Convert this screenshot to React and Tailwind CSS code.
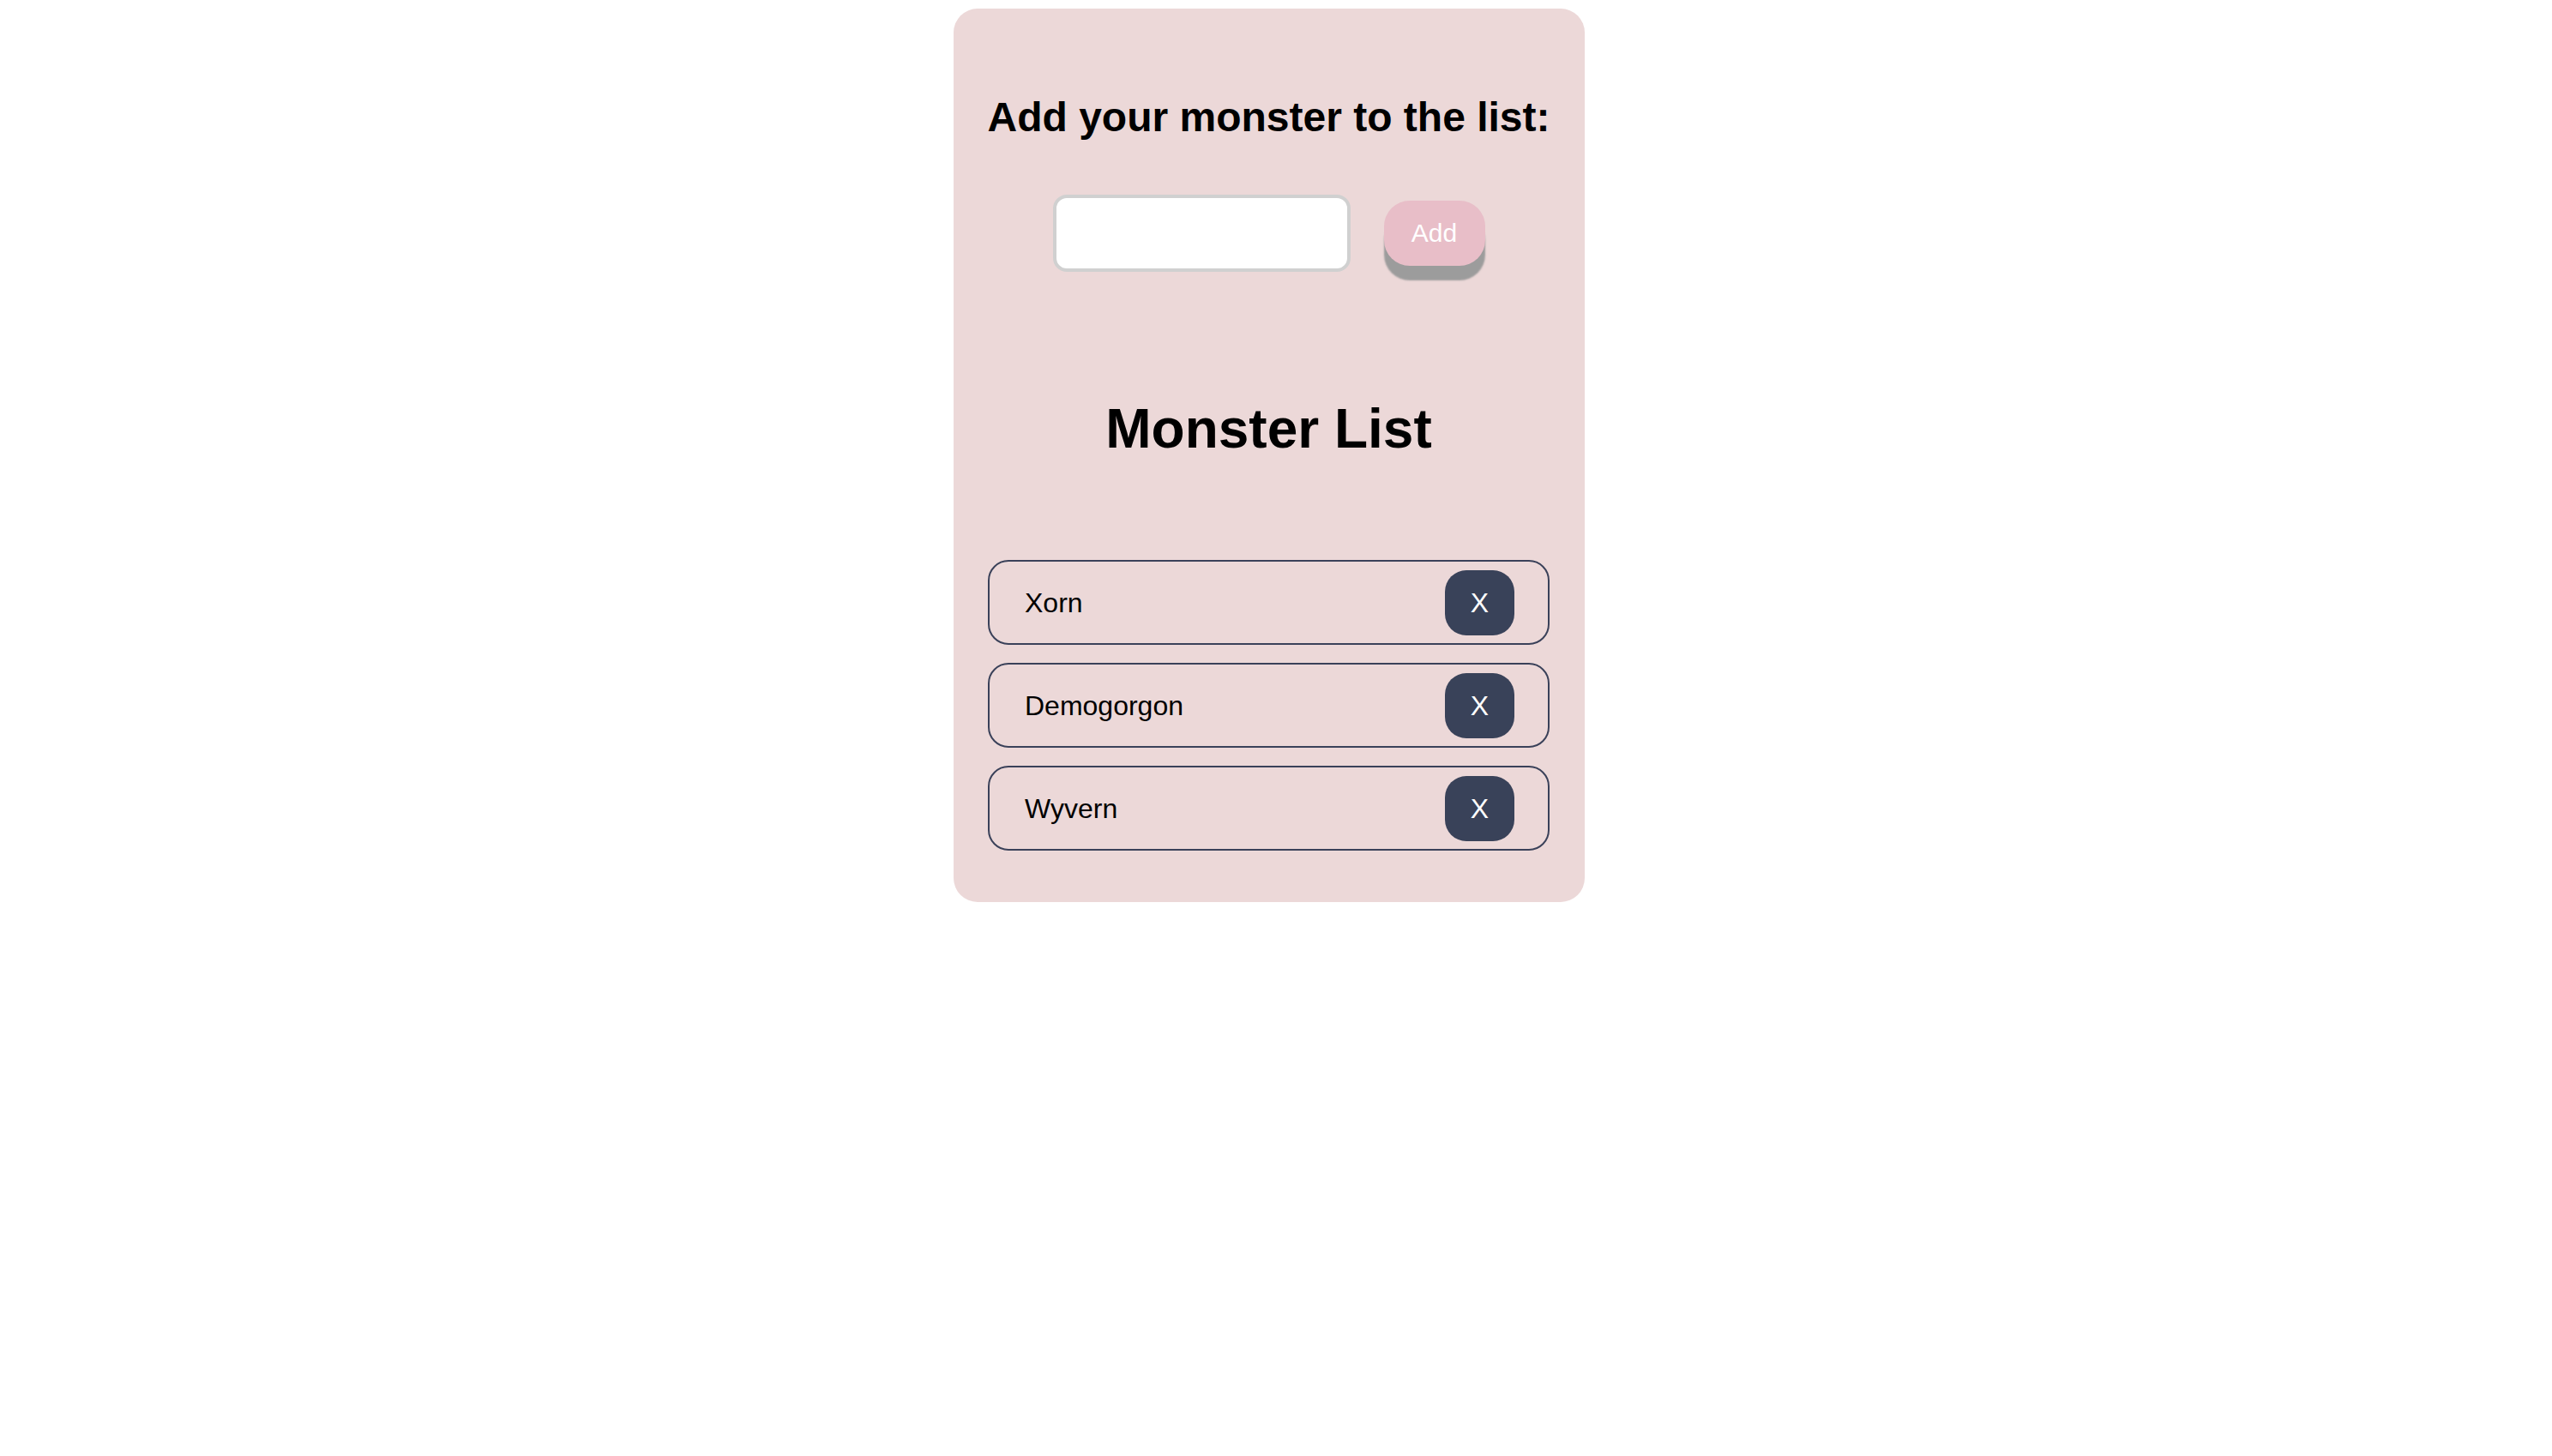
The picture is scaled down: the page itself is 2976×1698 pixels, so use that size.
import { useState } from 'react';

const App = () => {
    const [name, setName] = useState('');
    const [monsters, setMonsters] = useState(['Xorn', 'Demogorgon', 'Wyvern']);

    const addMonster = () => {
        if (!name.trim()) return;
        setMonsters([...monsters, name.trim()]);
        setName('');
    };

    return (
        <div className="min-h-screen bg-white pr-[16px] font-['Liberation_Sans',Arial,sans-serif] text-black">
            <div className="flex justify-center pt-[10px]">
                {/* Card */}
                <div className="w-[736px] rounded-[28px] bg-[#ecd8d8] pl-[40px] pr-[41px] pt-[103px] pb-[60px]">
                    <h2 className="-mx-[6px] whitespace-nowrap text-center text-[48px] font-bold leading-[48px]">Add your monster to the list:</h2>

                    <div className="mt-[66px] flex items-center justify-center gap-[39px]">
                        <input
                            value={name}
                            onChange={(e) => setName(e.target.value)}
                            className="h-[90px] w-[347px] rounded-[16px] border-[4px] border-[#d0d0d0] bg-white px-4 text-[32px] outline-none"
                        />
                        <button
                            onClick={addMonster}
                            className="h-[76px] w-[118px] rounded-[30px] bg-[#e8bec8] text-[30px] leading-none text-white shadow-[0_17px_2px_0_#9c9c9c]"
                        >
                            Add
                        </button>
                    </div>

                    <h1 className="mt-[151px] text-center text-[64px] font-bold leading-[64px]">Monster List</h1>

                    {/* List */}
                    <ul className="mt-[121px] flex flex-col gap-[21px]">
                        {monsters.map((m, i) => (
                            <li
                                key={m + i}
                                className="flex h-[99px] items-center justify-between rounded-[24px] border-2 border-[#3a4159] pl-[41px] pr-[39px]"
                            >
                                <span className="text-[32px] leading-none">{m}</span>
                                <button
                                    onClick={() => setMonsters(monsters.filter((_, j) => j !== i))}
                                    className="flex h-[76px] w-[81px] items-center justify-center rounded-[25px] bg-[#394259] text-[32px] leading-none text-white"
                                >
                                    X
                                </button>
                            </li>
                        ))}
                    </ul>
                </div>
            </div>
        </div>
    );
};

export default App;
